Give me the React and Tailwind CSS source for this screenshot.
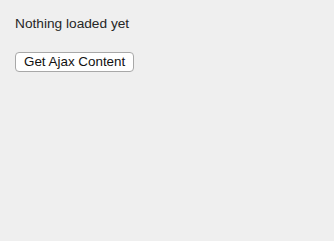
export default function App() {
    return (
        <div className="min-h-[241px] bg-[#efefef] px-[15px] pt-[15px] font-['Liberation_Sans',Arial,sans-serif] text-[#262626]">
            <p className="text-[13.7px] leading-[18px]">Nothing loaded yet</p>
            <button className="mt-[19px] h-[20px] rounded-[4px] border border-[#a8a8a8] bg-white pl-[8px] pr-[8px] text-[13.4px] leading-[18px] text-[#111]">
                Get Ajax Content
            </button>
        </div>
    );
}
